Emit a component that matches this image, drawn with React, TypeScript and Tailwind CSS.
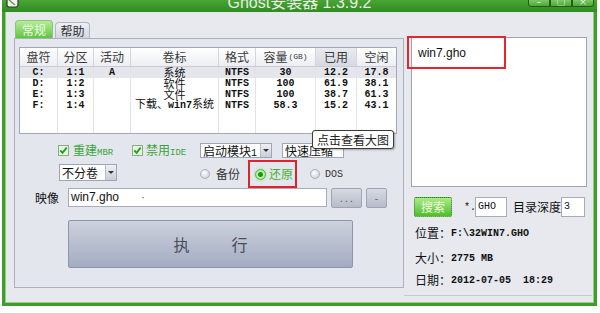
import React from "react";

const mono = "font-['Liberation_Mono','Noto_Sans_CJK_SC',monospace]";

function CheckBox() {
  return (
    <svg width="11" height="11" viewBox="0 0 11 11" className="shrink-0">
      <rect x="0.5" y="0.5" width="10" height="10" fill="#e6f6de" stroke="#86ad86" />
      <path d="M2.3 5.4 L4.5 7.9 L8.7 2.6" fill="none" stroke="#1f9e1f" strokeWidth="1.8" />
    </svg>
  );
}

function Radio({ on }: { on?: boolean }) {
  return on ? (
    <span className="w-[11px] h-[11px] shrink-0 rounded-full border border-[#58b048] bg-[radial-gradient(circle,#129c12_32%,#c9f4b4_48%,#7fd068_100%)] shadow-[0_0_3px_#8fe070]" />
  ) : (
    <span className="w-[10px] h-[10px] shrink-0 rounded-full border border-[#a9aeb9] bg-[radial-gradient(circle_at_40%_35%,#ffffff,#c4c8d2)]" />
  );
}

function Arrow() {
  return (
    <span className="w-[11px] self-stretch shrink-0 flex items-center justify-center border-l border-[#b7bcc7] bg-linear-to-b from-[#eef0f4] to-[#c9cdd7]">
      <span className="w-0 h-0 border-l-[3px] border-r-[3px] border-t-[3px] border-l-transparent border-r-transparent border-t-[#333]" />
    </span>
  );
}

const cols = ["w-[38px]", "w-[36px]", "w-[37px]", "w-[88px]", "w-[37px]", "w-[60px]", "w-[41px]", "w-[39px]"];

const rows = [
  ["C:", "1:1", "A", "系统", "NTFS", "30", "12.2", "17.8"],
  ["D:", "1:2", "", "软件", "NTFS", "100", "61.9", "38.1"],
  ["E:", "1:3", "", "文件", "NTFS", "100", "38.7", "61.3"],
  ["F:", "1:4", "", "下载、win7系统", "NTFS", "58.3", "15.2", "43.1"],
  ["", "", "", "", "", "", "", ""],
  ["", "", "", "", "", "", "", ""],
];

function Table() {
  return (
    <div className="w-[378px] border border-[#a3a8b3] bg-white">
      <div className="flex h-[19px] border-b border-[#c9ccd5]">
        {["盘符", "分区", "活动", "卷标", "格式", "容量", "已用", "空闲"].map((h, i) => (
          <div
            key={h}
            className={`${cols[i]} flex items-center justify-center text-[12px] text-[#3a3a3a] border-r border-[#d3d6de] last:border-r-0 ${
              i === 6 ? "bg-linear-to-b from-[#e9ebf0] to-[#d6d9e1]" : "bg-linear-to-b from-[#ffffff] to-[#eceef3]"
            }`}
          >
            {h}
            {i === 5 && <span className={`${mono} text-[8px] ml-[1px]`}>(GB)</span>}
          </div>
        ))}
      </div>
      {rows.map((r, ri) => (
        <div key={ri} className={`flex h-[11px] ${ri === 0 ? "bg-[#e4e6ec]" : ""}`}>
          {r.map((c, ci) => (
            <div
              key={ci}
              className={`${cols[ci]} h-[11px] flex items-center justify-center text-[#111] border-r border-[#e1e3e9] last:border-r-0 whitespace-nowrap ${mono} text-[10px] leading-[11px] font-bold`}
            >
              {ci === 3 && c ? (
                <span className="relative -top-[1px] font-['Noto_Sans_CJK_SC',sans-serif] font-normal text-[11px] leading-[10px]">
                  {c.includes("win7") ? (
                    <>
                      下载、<span className={`${mono} text-[10px] font-bold`}>win7</span>系统
                    </>
                  ) : (
                    c
                  )}
                </span>
              ) : (
                c
              )}
            </div>
          ))}
        </div>
      ))}
    </div>
  );
}

function GrayButton({ w, children }: { w: string; children: React.ReactNode }) {
  return (
    <div
      className={`${w} h-[20px] rounded-[2px] border border-[#9ea4b2] bg-linear-to-b from-[#d7dae3] to-[#b7bcc9] flex items-center justify-center text-[10px] text-[#555]`}
    >
      {children}
    </div>
  );
}

export default function App() {
  return (
    <div className="relative w-[600px] h-[313px] bg-white overflow-hidden font-['Noto_Sans_CJK_SC',sans-serif]">
      <div className="ml-[2px] w-[595px] h-[306px] flex flex-col bg-[#3f9c2d]">
        {/* title bar */}
        <div className="h-[12px] grid grid-cols-[1fr_auto_1fr] overflow-hidden bg-linear-to-b from-[#4aa536] to-[#2f8c20]">
          <div className="pl-[4px]">
            <svg width="13" height="9" viewBox="0 0 13 9">
              <rect x="1" y="-4" width="11" height="11" rx="2" fill="#f4f6f2" stroke="#2a3a24" strokeWidth="1.2" />
              <path d="M3 0 L9 5" stroke="#6a9a5a" strokeWidth="1.5" />
            </svg>
          </div>
          <div className="-mt-[5px] leading-[16px] text-[16px] text-[#e6ece2] whitespace-nowrap font-['Liberation_Sans','Noto_Sans_CJK_SC',sans-serif]">
            Ghost安装器 1.3.9.2
          </div>
          <div className="flex justify-end pr-[3px]">
            {["–", "□", "×"].map((g, i) => (
              <div
                key={i}
                className={`w-[22px] h-[8px] -mt-[1px] border border-[#1f5e14] bg-linear-to-b from-[#7cc866] to-[#4ea63a] flex items-end justify-center overflow-hidden text-[9px] leading-[8px] text-white ${
                  i === 0 ? "rounded-bl-[3px]" : ""
                } ${i === 2 ? "rounded-br-[3px]" : ""}`}
              >
                {g}
              </div>
            ))}
          </div>
        </div>

        {/* body */}
        <div className="flex-1 mx-[3px] mb-[3px] bg-[#e7e9ef] flex border-l border-r border-b border-[#8fd07a]">
          {/* left column */}
          <div className="w-[398px] pl-[8px] pt-[8px] flex flex-col">
            <div className="flex items-end h-[18px] ml-[1px]">
              <div className="w-[38px] h-[18px] rounded-t-[4px] border border-[#8cc478] border-b-0 bg-linear-to-b from-[#b6ec98] to-[#5fc43e] flex items-center justify-center text-[12px] text-[#eaffe0]">
                常规
              </div>
              <div className="w-[35px] h-[16px] ml-[2px] rounded-t-[4px] border border-[#b3b7c2] border-b-0 bg-linear-to-b from-[#eef0f4] to-[#d2d5de] flex items-center justify-center text-[12px] text-[#333]">
                帮助
              </div>
            </div>

            <div className="w-[390px] h-[250px] border border-[#adb1bc] bg-[#e4e6ed] pl-[4px] pt-[8px] flex flex-col">
              <Table />

              {/* options row 1 */}
              <div className="flex items-center h-[15px] mt-[9px]">
                <div className="ml-[39px] w-[74px] flex items-center">
                  <CheckBox />
                  <span className="ml-[4px] text-[12px] text-[#3aa53a] leading-none">
                    重建<span className={`${mono} text-[9px]`}>MBR</span>
                  </span>
                </div>
                <div className="w-[68px] flex items-center">
                  <CheckBox />
                  <span className="ml-[3px] text-[12px] text-[#3aa53a] leading-none">
                    禁用<span className={`${mono} text-[9px]`}>IDE</span>
                  </span>
                </div>
                <div className="w-[72px] h-[15px] flex border border-[#9ea6b6] bg-white">
                  <span className="flex-1 pl-[2px] text-[12px] leading-[13px] text-[#111] whitespace-nowrap overflow-hidden">
                    启动模块<span className={`${mono} text-[10px]`}>1</span>
                  </span>
                  <Arrow />
                </div>
                <div className="ml-[10px] w-[62px] h-[15px] border border-[#9ea6b6] bg-white pl-[2px] text-[12px] leading-[13px] text-[#111] whitespace-nowrap overflow-hidden">
                  快速压缩
                </div>
              </div>

              {/* options row 2 */}
              <div className="flex items-center h-[28px] mt-[2px]">
                <div className="ml-[40px] w-[58px] h-[17px] flex border border-[#9ea6b6] bg-white -mt-[4px]">
                  <span className="flex-1 pl-[2px] text-[12px] leading-[15px] text-[#111]">不分卷</span>
                  <Arrow />
                </div>
                <div className="ml-[83px] w-[48px] flex items-center">
                  <Radio />
                  <span className="ml-[6px] text-[12px] text-[#333] leading-none">备份</span>
                </div>
                <div className="w-[49px] h-[28px] border-2 border-[#e0222c] flex items-center pl-[5px]">
                  <Radio on />
                  <span className="ml-[3px] text-[12px] text-[#45b030] leading-none">还原</span>
                </div>
                <div className="ml-[13px] flex items-center">
                  <Radio />
                  <span className={`ml-[5px] ${mono} text-[10px] text-[#333]`}>DOS</span>
                </div>
              </div>

              {/* image row */}
              <div className="flex items-center h-[19px]">
                <span className="ml-[16px] w-[33px] text-[12px] text-[#111]">映像</span>
                <div className="w-[259px] h-[19px] border border-[#a6acb8] bg-white pl-[2px] text-[12px] leading-[17px] text-[#111] font-['Liberation_Sans',sans-serif]">
                  win7.gho<span className="ml-[22px] text-[#666]">·</span>
                </div>
                <div className="ml-[4px]">
                  <GrayButton w="w-[31px]">. . .</GrayButton>
                </div>
                <div className="ml-[4px]">
                  <GrayButton w="w-[21px]">-</GrayButton>
                </div>
              </div>

              {/* execute */}
              <div className="ml-[49px] mt-[13px] w-[285px] h-[48px] rounded-[2px] border border-[#8e96aa] bg-linear-to-b from-[#cdd1dc] to-[#a3acc2] flex items-center justify-center gap-[42px] text-[16px] text-[#4a4e5a]">
                <span>执</span>
                <span>行</span>
              </div>
            </div>
          </div>

          {/* right column */}
          <div className="flex-1 pt-[25px] flex flex-col border-b border-[#c6c9d2] mb-[6px] mr-[1px]">
            <div className="relative ml-[7px] w-[176px] h-[150px] border border-[#9ea3ae] bg-white">
              <div className="pl-[6px] pt-[6px] text-[12px] text-[#111] font-['Liberation_Sans',sans-serif]">win7.gho</div>
              <div className="absolute left-[-5px] top-[-2px] w-[99px] h-[33px] border-2 border-[#e3262f]" />
            </div>

            <div className="flex items-center h-[20px] mt-[10px]">
              <div className="ml-[10px] w-[38px] h-[20px] rounded-[2px] border border-dotted border-[#3e7a2e] bg-linear-to-b from-[#a8ec84] to-[#4dbd2d] flex items-center justify-center text-[12px] text-[#f2fbd8]">
                搜索
              </div>
              <span className={`ml-[12px] w-[11px] ${mono} text-[10px] text-[#111]`}>*.</span>
              <div className={`w-[32px] h-[20px] border border-[#a6acb8] bg-white pl-[2px] ${mono} text-[10px] leading-[18px] text-[#111]`}>
                GHO
              </div>
              <span className="ml-[6px] w-[48px] text-[12px] text-[#111]">目录深度</span>
              <div className={`w-[24px] h-[20px] border border-[#a6acb8] bg-white pl-[2px] ${mono} text-[10px] leading-[18px] text-[#111]`}>
                3
              </div>
            </div>

            <div className="ml-[11px] mt-[9px] h-[14px] flex items-center text-[12px] text-[#111] whitespace-nowrap">
              位置：<span className={`${mono} text-[10px] font-bold`}>F:\32WIN7.GHO</span>
            </div>
            <div className="ml-[11px] mt-[11px] h-[14px] flex items-center text-[12px] text-[#111] whitespace-nowrap">
              大小：<span className={`${mono} text-[10px] font-bold`}>2775 MB</span>
            </div>
            <div className="ml-[11px] mt-[8px] h-[14px] flex items-center text-[12px] text-[#111] whitespace-nowrap">
              日期：<span className={`${mono} text-[10px] font-bold whitespace-pre`}>2012-07-05  18:29</span>
            </div>
          </div>
        </div>
      </div>

      {/* tooltip */}
      <div className="absolute left-[312px] top-[130px] w-[82px] h-[19px] rounded-[3px] border border-[#3a3a3a] bg-white shadow-[1px_1px_2px_rgba(0,0,0,0.3)] flex items-center justify-center text-[12px] text-[#222]">
        点击查看大图
      </div>
    </div>
  );
}
